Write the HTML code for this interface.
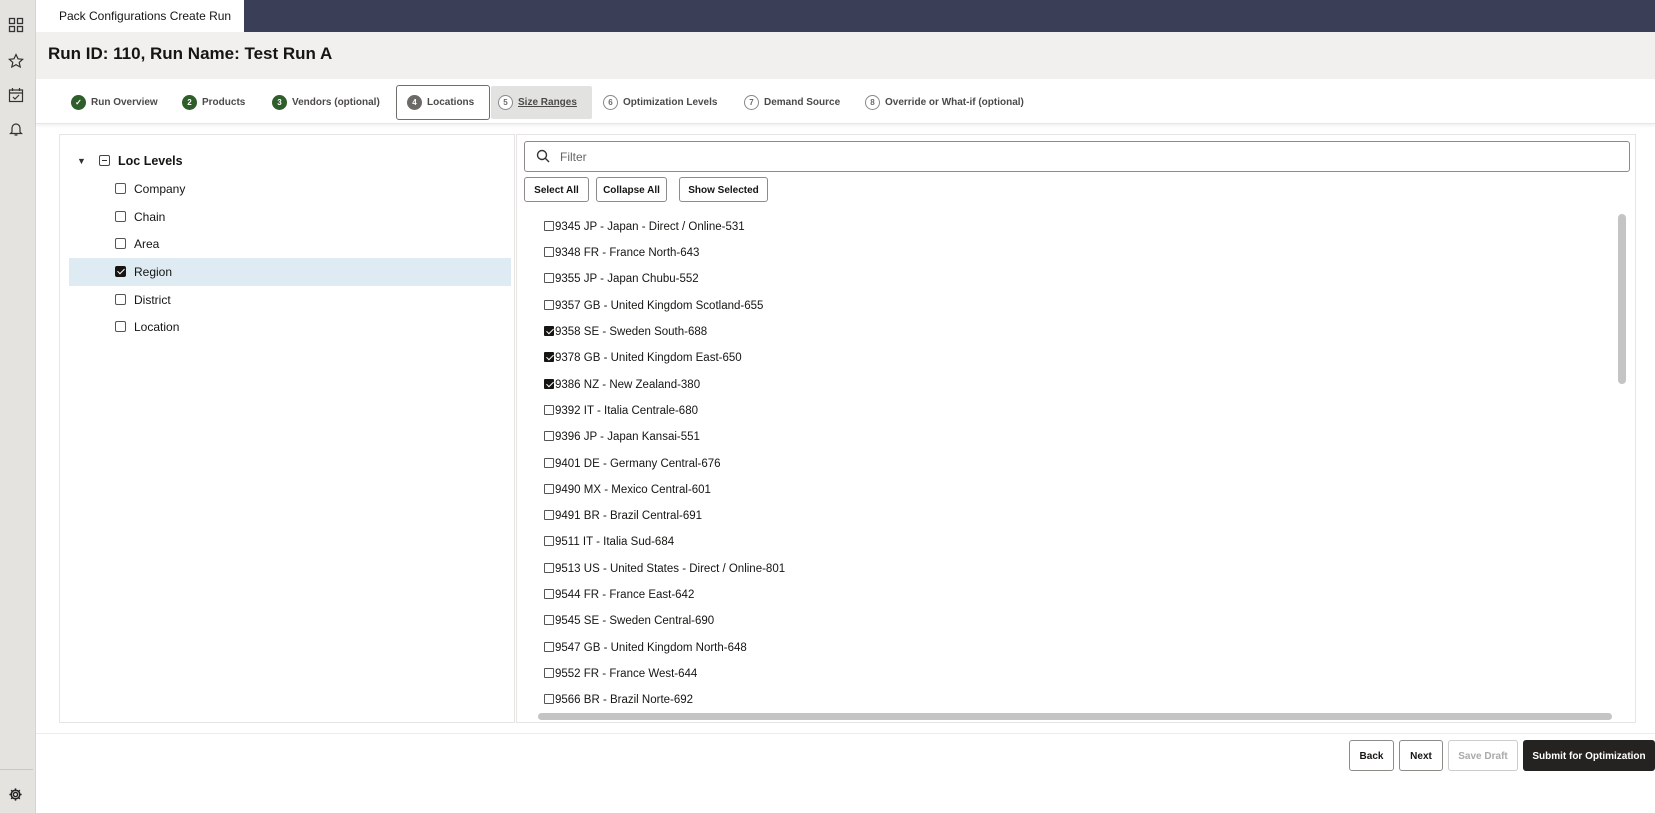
<!DOCTYPE html>
<html><head><meta charset="utf-8"><style>
*{box-sizing:border-box;margin:0;padding:0}
body{width:1655px;height:813px;position:relative;background:#fff;font-family:"Liberation Sans",sans-serif;color:#161513;overflow:hidden}
.a{position:absolute}
.side{left:0;top:0;width:36px;height:813px;background:#e5e3df;border-right:1px solid #d6d4d0}
.top{left:36px;top:0;width:1619px;height:32px;background:#3b3e57}
.tab{left:36px;top:0;width:208px;height:32px;background:#fff;font-size:12px;line-height:32px;padding-left:23px}
.titlebar{left:36px;top:32px;width:1619px;height:47px;background:#f1f0ef}
.title{left:48px;top:44px;font-size:17px;font-weight:bold}
.steps{left:36px;top:79px;width:1619px;height:45px;background:#fff;border-bottom:1px solid #e6e6e6;box-shadow:0 2px 3px rgba(0,0,0,.06)}
.st{top:95px;font-size:10px;font-weight:bold;color:#4b4a48;line-height:16px}
.c{display:inline-block;width:15px;height:15px;border-radius:50%;vertical-align:middle;text-align:center;font-size:8px;line-height:15px;margin-right:5px;color:#fff}
.g{background:#2e5e2a}
.o{border:1px solid #8a8986;color:#6b6a67;background:#fff;line-height:13px}
.panel{border:1px solid #e6e5e3;background:#fff}
.cb{display:inline-block;width:11px;height:11px;border:1px solid #555;border-radius:2px;vertical-align:-1px}
.ck{background:#161513;border-color:#161513;position:relative}
.ck:after{content:"";position:absolute;left:3px;top:0px;width:3px;height:6px;border:solid #fff;border-width:0 1.5px 1.5px 0;transform:rotate(45deg)}
.lv{left:115px;font-size:12px}
.lv .cb{margin-right:8px}
.row{left:544px;font-size:11.5px}
.row .cb{width:10px;height:10px;border-radius:1px;margin-right:1px}
.btn{border:1px solid #8d8c89;border-radius:3px;background:#fff;font-size:10px;font-weight:bold;text-align:center}
</style></head><body>
<div class="a side"></div>
<svg class="a" style="left:8px;top:17px" width="16" height="16" viewBox="0 0 16 16" fill="none" stroke="#333" stroke-width="1.3"><rect x="1.5" y="1.5" width="5" height="5"/><rect x="9.5" y="1.5" width="5" height="5"/><rect x="1.5" y="9.5" width="5" height="5"/><rect x="9.5" y="9.5" width="5" height="5"/></svg>
<svg class="a" style="left:8px;top:53px" width="16" height="16" viewBox="0 0 16 16" fill="none" stroke="#333" stroke-width="1.2"><path d="M8 1.5l2 4.3 4.6.5-3.4 3.1 1 4.6L8 11.7 3.8 14l1-4.6L1.4 6.3 6 5.8z"/></svg>
<svg class="a" style="left:8px;top:87px" width="16" height="16" viewBox="0 0 16 16" fill="none" stroke="#333" stroke-width="1.2"><rect x="1.5" y="3" width="13" height="11.5"/><path d="M4.5 1v3M11.5 1v3M1.5 6h13M5 10l2 2 4-4"/></svg>
<svg class="a" style="left:8px;top:121px" width="16" height="16" viewBox="0 0 16 16" fill="none" stroke="#333" stroke-width="1.2"><path d="M4 11V7a4 4 0 018 0v4l1.5 1.5h-11z M6.5 14h3"/></svg>
<div class="a" style="left:0;top:769px;width:33px;height:1px;background:#c9c7c3"></div>
<svg class="a" style="left:8px;top:787px" width="15" height="15" viewBox="0 0 16 16" fill="none" stroke="#222" stroke-width="1.6"><circle cx="8" cy="8" r="2.3"/><path d="M8 1.5v2M8 12.5v2M1.5 8h2M12.5 8h2M3.4 3.4l1.4 1.4M11.2 11.2l1.4 1.4M3.4 12.6l1.4-1.4M11.2 4.8l1.4-1.4"/><circle cx="8" cy="8" r="4.6"/></svg>
<div class="a top"></div>
<div class="a tab">Pack Configurations Create Run</div>
<div class="a titlebar"></div>
<div class="a title">Run ID: 110, Run Name: Test Run A</div>
<div class="a steps"></div>
<div class="a" style="left:396px;top:85px;width:94px;height:35px;border:1px solid #6f6e6b;border-radius:3px;background:#fff"></div>
<div class="a" style="left:491px;top:86px;width:101px;height:33px;background:#e2e2e1;border-radius:2px"></div>
<div class="a st" style="left:71px"><span class="c g">✓</span>Run Overview</div>
<div class="a st" style="left:182px"><span class="c g">2</span>Products</div>
<div class="a st" style="left:272px"><span class="c g">3</span>Vendors (optional)</div>
<div class="a st" style="left:407px"><span class="c" style="background:#6b6a67">4</span>Locations</div>
<div class="a st" style="left:498px"><span class="c o">5</span><u>Size Ranges</u></div>
<div class="a st" style="left:603px"><span class="c o">6</span>Optimization Levels</div>
<div class="a st" style="left:744px"><span class="c o">7</span>Demand Source</div>
<div class="a st" style="left:865px"><span class="c o">8</span>Override or What-if (optional)</div>

<div class="a panel" style="left:59px;top:134px;width:456px;height:589px"></div>
<div class="a panel" style="left:516px;top:134px;width:1120px;height:589px"></div>
<div class="a" style="left:69px;top:258px;width:442px;height:28px;background:#dfebf3"></div>
<div class="a" style="left:77px;top:156px;font-size:9px;color:#333">▼</div>
<div class="a" style="left:99px;top:155px;width:11px;height:11px;border:1px solid #444;border-radius:2px"><div style="position:absolute;left:2px;top:4px;width:5px;height:1px;background:#333"></div></div>
<div class="a" style="left:118px;top:154px;font-size:12.5px;font-weight:bold">Loc Levels</div>
<div class="a lv" style="top:182px"><span class="cb"></span>Company</div>
<div class="a lv" style="top:210px"><span class="cb"></span>Chain</div>
<div class="a lv" style="top:237px"><span class="cb"></span>Area</div>
<div class="a lv" style="top:265px"><span class="cb ck"></span>Region</div>
<div class="a lv" style="top:293px"><span class="cb"></span>District</div>
<div class="a lv" style="top:320px"><span class="cb"></span>Location</div>

<div class="a" style="left:524px;top:141px;width:1106px;height:31px;border:1px solid #8d8c89;border-radius:3px"></div>
<svg class="a" style="left:536px;top:149px" width="14" height="14" viewBox="0 0 14 14" fill="none" stroke="#333" stroke-width="1.4"><circle cx="6" cy="6" r="4.5"/><path d="M9.3 9.3l3.7 3.7"/></svg>
<div class="a" style="left:560px;top:150px;font-size:12px;color:#666">Filter</div>
<div class="a btn" style="left:524px;top:177px;width:65px;height:25px;line-height:25px">Select All</div>
<div class="a btn" style="left:596px;top:177px;width:71px;height:25px;line-height:25px">Collapse All</div>
<div class="a btn" style="left:679px;top:177px;width:89px;height:25px;line-height:25px">Show Selected</div>

<div class="a row" style="top:221px"><span class="cb"></span>9345 JP - Japan - Direct / Online-531</div>
<div class="a row" style="top:247px"><span class="cb"></span>9348 FR - France North-643</div>
<div class="a row" style="top:273px"><span class="cb"></span>9355 JP - Japan Chubu-552</div>
<div class="a row" style="top:300px"><span class="cb"></span>9357 GB - United Kingdom Scotland-655</div>
<div class="a row" style="top:326px"><span class="cb ck"></span>9358 SE - Sweden South-688</div>
<div class="a row" style="top:352px"><span class="cb ck"></span>9378 GB - United Kingdom East-650</div>
<div class="a row" style="top:379px"><span class="cb ck"></span>9386 NZ - New Zealand-380</div>
<div class="a row" style="top:405px"><span class="cb"></span>9392 IT - Italia Centrale-680</div>
<div class="a row" style="top:431px"><span class="cb"></span>9396 JP - Japan Kansai-551</div>
<div class="a row" style="top:458px"><span class="cb"></span>9401 DE - Germany Central-676</div>
<div class="a row" style="top:484px"><span class="cb"></span>9490 MX - Mexico Central-601</div>
<div class="a row" style="top:510px"><span class="cb"></span>9491 BR - Brazil Central-691</div>
<div class="a row" style="top:536px"><span class="cb"></span>9511 IT - Italia Sud-684</div>
<div class="a row" style="top:563px"><span class="cb"></span>9513 US - United States - Direct / Online-801</div>
<div class="a row" style="top:589px"><span class="cb"></span>9544 FR - France East-642</div>
<div class="a row" style="top:615px"><span class="cb"></span>9545 SE - Sweden Central-690</div>
<div class="a row" style="top:642px"><span class="cb"></span>9547 GB - United Kingdom North-648</div>
<div class="a row" style="top:668px"><span class="cb"></span>9552 FR - France West-644</div>
<div class="a row" style="top:694px"><span class="cb"></span>9566 BR - Brazil Norte-692</div>

<div class="a" style="left:1618px;top:214px;width:8px;height:170px;background:#c4c4c4;border-radius:4px"></div>
<div class="a" style="left:538px;top:713px;width:1074px;height:7px;background:#c4c4c4;border-radius:4px"></div>
<div class="a" style="left:36px;top:733px;width:1619px;height:1px;background:#ececec"></div>

<div class="a btn" style="left:1349px;top:740px;width:45px;height:31px;line-height:31px">Back</div>
<div class="a btn" style="left:1399px;top:740px;width:44px;height:31px;line-height:31px">Next</div>
<div class="a btn" style="left:1448px;top:740px;width:70px;height:31px;line-height:31px;color:#aaa;border-color:#ccc">Save Draft</div>
<div class="a btn" style="left:1523px;top:740px;width:132px;height:31px;line-height:31px;background:#242322;color:#fff;border-color:#242322">Submit for Optimization</div>
</body></html>
